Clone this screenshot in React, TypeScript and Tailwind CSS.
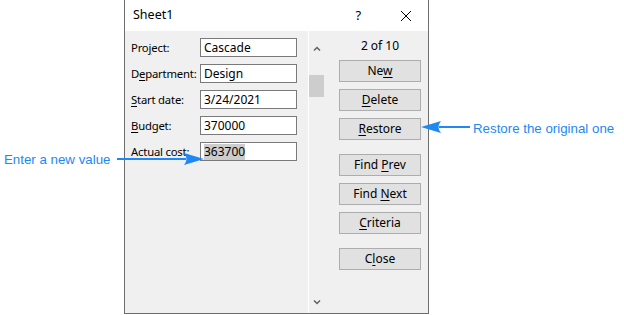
import React from 'react';

const ui = "font-['Noto_Sans',_'Segoe_UI',_sans-serif]";

const fields = [
  { pre: 'Pro', key: 'j', post: 'ect:', value: 'Cascade' },
  { pre: 'D', key: 'e', post: 'partment:', value: 'Design' },
  { pre: '', key: 'S', post: 'tart date:', value: '3/24/2021' },
  { pre: '', key: 'B', post: 'udget:', value: '370000' },
  { pre: '', key: 'A', post: 'ctual cost:', value: '363700', selected: true },
];

const buttons = [
  { pre: 'Ne', key: 'w', post: '', mt: 'mt-0' },
  { pre: '', key: 'D', post: 'elete', mt: 'mt-[7px]' },
  { pre: '', key: 'R', post: 'estore', mt: 'mt-[7px]' },
  { pre: 'Find ', key: 'P', post: 'rev', mt: 'mt-[14px]' },
  { pre: 'Find ', key: 'N', post: 'ext', mt: 'mt-[7px]' },
  { pre: '', key: 'C', post: 'riteria', mt: 'mt-[7px]' },
  { pre: 'C', key: 'l', post: 'ose', mt: 'mt-[14px]' },
];

const Key = ({ pre, k, post }: { pre: string; k: string; post: string }) => (
  <>
    {pre}
    <span className="underline underline-offset-2">{k}</span>
    {post}
  </>
);

const Arrow = ({ x1, x2, y }: { x1: number; x2: number; y: number }) => {
  const dir = x2 > x1 ? 1 : -1;
  const base = x2 - dir * 18;
  return (
    <g fill="#1e88f5" stroke="none">
      <rect x={Math.min(x1, base)} y={y - 1} width={Math.abs(base - x1)} height={2} />
      <path d={`M${x2} ${y} L${base - dir * 2} ${y - 6} Q${base + dir * 3} ${y} ${base - dir * 2} ${y + 6} Z`} />
    </g>
  );
};

export default function App() {
  return (
    <div className="relative w-[624px] h-[315px] bg-white flex">
      <div className="w-[124px] pt-[150px] pl-[4px] text-[13.3px] text-[#1e88f5] font-['Liberation_Sans',_Arial,_sans-serif] whitespace-nowrap">
        Enter a new value
      </div>

      <div className={`w-[305px] h-[314px] border-x border-b border-[#6e6e6e] bg-[#f0f0f0] flex flex-col ${ui} text-[11.3px] tracking-[-0.2px] text-black`}>
        <div className="h-[31px] bg-white flex items-center shrink-0">
          <span className="ml-[8px] text-[12.5px] tracking-normal">Sheet1</span>
          <span className="ml-auto mr-[39px] text-[13px]">?</span>
          <svg width="12" height="12" viewBox="0 0 12 12" className="mr-[16px]">
            <path d="M1 1 L11 11 M11 1 L1 11" stroke="#000" strokeWidth="1" />
          </svg>
        </div>

        <div className="flex flex-1">
          <div className="w-[183px] pt-[7px] pl-[6px] flex flex-col gap-[7px]">
            {fields.map((f) => (
              <div key={f.value} className="flex items-center h-[19px]">
                <span className="w-[69px] whitespace-nowrap leading-none">
                  <Key pre={f.pre} k={f.key} post={f.post} />
                </span>
                <div className="w-[97px] h-[19px] bg-white border border-[#7a7a7a] flex items-center pl-[3px] text-[12px] tracking-normal">
                  <span className={f.selected ? 'bg-[#cccccc] leading-[16px]' : 'leading-[16px]'}>{f.value}</span>
                </div>
              </div>
            ))}
          </div>

          <div className="w-[17px] border-l border-white flex flex-col items-center pb-[8px]">
            <svg width="8" height="6" viewBox="0 0 8 6" className="mt-[15px]">
              <path d="M1 4.5 L4 1.5 L7 4.5" fill="none" stroke="#606060" strokeWidth="1.5" />
            </svg>
            <div className="w-[15px] h-[22px] bg-[#cdcdcd] mt-[23px] self-start" />
            <svg width="8" height="6" viewBox="0 0 8 6" className="mt-auto">
              <path d="M1 1.5 L4 4.5 L7 1.5" fill="none" stroke="#606060" strokeWidth="1.5" />
            </svg>
          </div>

          <div className="flex-1 pl-[14px] pt-[6px] flex flex-col text-[12px] tracking-normal">
            <div className="w-[82px] text-center leading-[17px] h-[17px] mb-[6px]">2 of 10</div>
            {buttons.map((b) => (
              <div
                key={b.pre + b.key + b.post}
                className={`${b.mt} w-[82px] h-[22px] bg-[#e1e1e1] border border-[#adadad] flex items-center justify-center leading-none`}
              >
                <span>
                  <Key pre={b.pre} k={b.key} post={b.post} />
                </span>
              </div>
            ))}
          </div>
        </div>
      </div>

      <div className="pt-[119px] pl-[44px] text-[13.3px] text-[#1e88f5] font-['Liberation_Sans',_Arial,_sans-serif] whitespace-nowrap">
        Restore the original one
      </div>

      <svg className="absolute left-0 top-0 pointer-events-none" width="624" height="315">
        <Arrow x1={117} x2={204} y={159} />
        <Arrow x1={470} x2={421} y={127} />
      </svg>
    </div>
  );
}
